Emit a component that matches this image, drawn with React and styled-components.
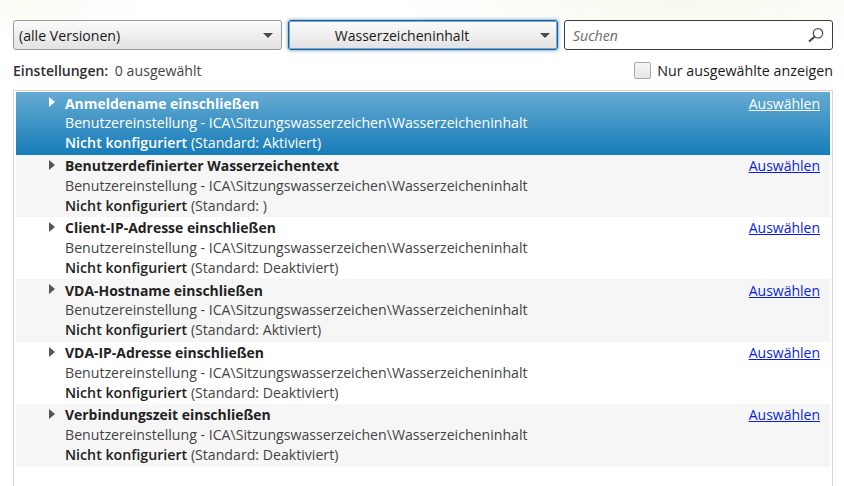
import React from 'react'
import styled, { createGlobalStyle } from 'styled-components'

const GlobalStyle = createGlobalStyle`
  html, body { margin: 0; padding: 0; height: 100%; overflow: hidden; }
  #root { height: 100%; }
`

const Page = styled.div`
  height: 486px;
  box-sizing: border-box;
  padding: 20px 11px 0 13px;
  display: flex;
  flex-direction: column;
  overflow: hidden;
  font-family: 'Open Sans', 'Noto Sans', sans-serif;
  font-size: 14.15px;
  color: #2a2a2a;
  background:
    radial-gradient(ellipse 300px 60px at 680px 0, #f6faee 0%, rgba(255,255,255,0) 100%),
    radial-gradient(ellipse 140px 40px at 20px 0, #f9fbf3 0%, rgba(255,255,255,0) 100%),
    #fff;
`

const Toolbar = styled.div`
  display: grid;
  grid-template-columns: repeat(3, 1fr);
  column-gap: 6.3px;
`

const SelectBox = styled.div`
  height: 30px;
  box-sizing: border-box;
  display: flex;
  align-items: center;
  padding: 0 ${({ $centered }) => ($centered ? '0' : '5px')};
  border-radius: 3px;
  border: 1px solid ${({ $focused }) => ($focused ? '#15609c' : '#9a9a9a')};
  box-shadow: ${({ $focused }) => ($focused ? 'inset 0 0 0 1px #7fa9cb, 0 0 3px 1px #8fb8d6' : 'none')};
  background: linear-gradient(#fbfbfb, #e2e2e2);
  color: #1a1a1a;
`

const SelectText = styled.span`
  flex: 1;
  font-size: ${({ $centered }) => ($centered ? '14px' : 'inherit')};
  text-align: ${({ $centered }) => ($centered ? 'center' : 'left')};
  padding-right: ${({ $centered }) => ($centered ? '25px' : '0')};
`

const Caret = styled.span`
  width: 0;
  height: 0;
  border-left: 5px solid transparent;
  border-right: 5px solid transparent;
  border-top: 5px solid #4a4a4a;
  margin-right: ${({ $centered }) => ($centered ? '7px' : '3px')};
`

const SearchBox = styled.div`
  height: 30px;
  box-sizing: border-box;
  display: flex;
  align-items: center;
  justify-content: space-between;
  padding: 0 8px;
  border: 1px solid #3c3c3c;
  border-radius: 3px;
  background: #fff;
`

const Placeholder = styled.span`
  font-style: italic;
  color: #6a6a6a;
`

const FilterRow = styled.div`
  height: 40px;
  display: flex;
  align-items: center;
  justify-content: space-between;
`

const Counts = styled.div`
  color: #444;
  strong { font-weight: 600; font-size: 14px; color: #2f2f2f; margin-right: 3px; }
`

const CheckLabel = styled.label`
  display: flex;
  align-items: center;
  gap: 6px;
  font-size: 14.25px;
  color: #1a1a1a;
`

const CheckBox = styled.span`
  width: 17px;
  height: 17px;
  box-sizing: border-box;
  border: 1px solid #a8a8a8;
  border-radius: 2px;
  background: linear-gradient(#f6f6f6, #e6e6e6);
`

const List = styled.div`
  flex: 1;
  box-sizing: border-box;
  border: 1px solid #d6d6d6;
  border-bottom: none;
  padding: 1.4px 2px 0;
`

const Row = styled.div`
  height: 62.36px;
  box-sizing: border-box;
  padding-left: 31px;
  display: grid;
  grid-template-columns: 18px 1fr auto;
  color: ${({ $selected }) => ($selected ? '#fff' : '#444')};
  background: ${({ $selected, $shaded }) =>
    $selected ? 'linear-gradient(#66abd2, #167cb9)' : $shaded ? '#f6f6f6' : 'transparent'};
`

const Arrow = styled.span`
  width: 0;
  height: 0;
  margin: 5px 0 0 2px;
  border-top: 5.5px solid transparent;
  border-bottom: 5.5px solid transparent;
  border-left: 6px solid ${({ $selected }) => ($selected ? '#fff' : '#555')};
`

const Info = styled.div`
  line-height: 19.7px;
  padding-top: 1.25px;
  white-space: nowrap;
`

const Title = styled.div`
  font-weight: 700;
  font-size: 13.95px;
  color: ${({ $selected }) => ($selected ? '#fff' : '#222')};
`

const StatusLine = styled.div`
  margin-top: 0.15px;
`

const Status = styled.strong`
  font-weight: 600;
  font-size: 14.2px;
  color: ${({ $selected }) => ($selected ? '#fff' : '#222')};
`

const PickLink = styled.a`
  margin: 1.3px 10px 0 0;
  font-size: 14px;
  line-height: 19.7px;
  text-decoration: underline;
  color: ${({ $selected }) => ($selected ? '#fff' : '#0a1ee0')};
`

const SearchIcon = () => (
  <svg width="16" height="16" viewBox="0 0 16 16" fill="none" stroke="#444" strokeWidth="1.2">
    <circle cx="10" cy="6.3" r="4.7" />
    <path d="M6.5 9.8 1 14.5" strokeWidth="2" />
  </svg>
)

const PATH = 'Benutzereinstellung - ICA\\Sitzungswasserzeichen\\Wasserzeicheninhalt'

const settings = [
  { name: 'Anmeldename einschließen', fallback: '(Standard: Aktiviert)' },
  { name: 'Benutzerdefinierter Wasserzeichentext', fallback: '(Standard: )' },
  { name: 'Client-IP-Adresse einschließen', fallback: '(Standard: Deaktiviert)' },
  { name: 'VDA-Hostname einschließen', fallback: '(Standard: Aktiviert)' },
  { name: 'VDA-IP-Adresse einschließen', fallback: '(Standard: Deaktiviert)' },
  { name: 'Verbindungszeit einschließen', fallback: '(Standard: Deaktiviert)' },
]

export default function App() {
  return (
    <Page>
      <GlobalStyle />
      <Toolbar>
        <SelectBox>
          <SelectText>(alle Versionen)</SelectText>
          <Caret />
        </SelectBox>
        <SelectBox $focused $centered>
          <SelectText $centered>Wasserzeicheninhalt</SelectText>
          <Caret $centered />
        </SelectBox>
        <SearchBox>
          <Placeholder>Suchen</Placeholder>
          <SearchIcon />
        </SearchBox>
      </Toolbar>
      <FilterRow>
        <Counts><strong>Einstellungen:</strong> 0 ausgewählt</Counts>
        <CheckLabel><CheckBox />Nur ausgewählte anzeigen</CheckLabel>
      </FilterRow>
      <List>
        {settings.map((item, index) => {
          const selected = index === 0
          return (
            <Row key={item.name} $selected={selected} $shaded={index % 2 === 1}>
              <Arrow $selected={selected} />
              <Info>
                <Title $selected={selected}>{item.name}</Title>
                <div>{PATH}</div>
                <StatusLine><Status $selected={selected}>Nicht konfiguriert</Status> {item.fallback}</StatusLine>
              </Info>
              <PickLink $selected={selected}>Auswählen</PickLink>
            </Row>
          )
        })}
      </List>
    </Page>
  )
}
